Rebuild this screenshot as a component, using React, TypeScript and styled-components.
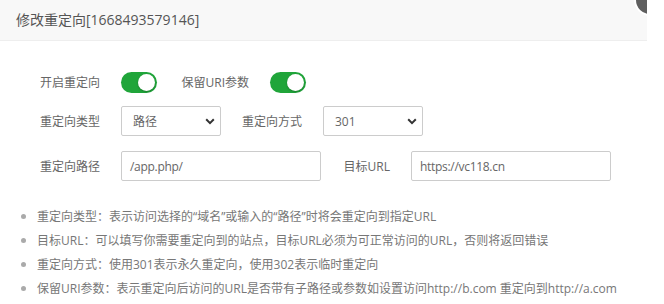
import React from "react";
import styled, { createGlobalStyle } from "styled-components";

const GlobalStyle = createGlobalStyle`
  html, body {
    margin: 0;
    padding: 0;
    background: #fff;
  }
  body {
    font-family: "Open Sans", "Noto Sans CJK SC", sans-serif;
    font-size: 12px;
    color: #666;
  }
`;

const Dialog = styled.div`
  position: relative;
  width: 647px;
  height: 304px;
  overflow: hidden;
  background: #fff;
`;

const Header = styled.div`
  height: 40px;
  line-height: 40px;
  padding-left: 16px;
  background: #f8f8f8;
  border-bottom: 1px solid #eee;
  font-size: 14px;
  color: #555;
`;

const Close = styled.span`
  position: absolute;
  left: 634px;
  top: -16px;
  width: 28px;
  height: 28px;
  border-radius: 50%;
  background: #5f5f5f;
  border: 2px solid #fff;
`;

const Form = styled.div`
  padding: 26px 0 0 20px;
`;

const Row = styled.div<{ $mb?: number }>`
  display: flex;
  align-items: center;
  height: 30px;
  margin-bottom: ${(p) => p.$mb ?? 0}px;
`;

const Label = styled.span<{ $w: number; $ml?: number }>`
  width: ${(p) => p.$w}px;
  margin-left: ${(p) => p.$ml ?? 0}px;
  margin-right: 21px;
  text-align: right;
  font-size: 12px;
  color: #666;
  white-space: nowrap;
`;

const Switch = styled.span<{ $on: boolean }>`
  display: flex;
  align-items: center;
  justify-content: ${(p) => (p.$on ? "flex-end" : "flex-start")};
  width: 36px;
  height: 21px;
  padding: 0 2px;
  box-sizing: border-box;
  border-radius: 11px;
  background: ${(p) => (p.$on ? "#20a53a" : "#ccc")};
`;

const Knob = styled.span`
  width: 17px;
  height: 17px;
  border-radius: 50%;
  background: #fff;
  box-shadow: 0 1px 2px rgba(0, 0, 0, 0.25);
`;

const Select = styled.div`
  display: flex;
  align-items: center;
  justify-content: space-between;
  box-sizing: border-box;
  width: 100px;
  height: 30px;
  padding: 0 5px 0 11px;
  border: 1px solid #ccc;
  border-radius: 2px;
  font-size: 12px;
  color: #666;
`;

const Input = styled.div<{ $w: number }>`
  display: flex;
  align-items: center;
  box-sizing: border-box;
  width: ${(p) => p.$w}px;
  height: 30px;
  padding: 0 8px;
  border: 1px solid #ccc;
  border-radius: 2px;
  font-size: 12px;
  color: #666;
  letter-spacing: -0.3px;
`;

const Notes = styled.ul`
  list-style: none;
  margin: 23px 0 0;
  padding: 0 0 0 21px;
`;

const Note = styled.li`
  display: flex;
  align-items: center;
  height: 24px;
  font-size: 12px;
  color: #777;
  white-space: nowrap;

  &::before {
    content: "";
    width: 5px;
    height: 5px;
    border-radius: 50%;
    background: #aaa;
    margin-right: 11px;
    flex-shrink: 0;
  }
`;

const Chevron = () => (
  <svg width="10" height="7" viewBox="0 0 10 7">
    <path d="M1.2 1.3L5 5.1l3.8-3.8" fill="none" stroke="#333" strokeWidth="2" />
  </svg>
);

const Toggle: React.FC<{ on: boolean }> = ({ on }) => (
  <Switch $on={on}>
    <Knob />
  </Switch>
);

const notes = [
  "重定向类型：表示访问选择的“域名”或输入的“路径”时将会重定向到指定URL",
  "目标URL：可以填写你需要重定向到的站点，目标URL必须为可正常访问的URL，否则将返回错误",
  "重定向方式：使用301表示永久重定向，使用302表示临时重定向",
  "保留URI参数：表示重定向后访问的URL是否带有子路径或参数如设置访问http://b.com 重定向到http://a.com",
];

export default function App() {
  return (
    <>
      <GlobalStyle />
      <Dialog>
        <Header>修改重定向[1668493579146]</Header>
        <Close />
        <Form>
          <Row $mb={9}>
            <Label $w={80}>开启重定向</Label>
            <Toggle on />
            <Label $w={80} $ml={12}>保留URI参数</Label>
            <Toggle on />
          </Row>
          <Row $mb={15}>
            <Label $w={80}>重定向类型</Label>
            <Select>
              路径
              <Chevron />
            </Select>
            <Label $w={80} $ml={1}>重定向方式</Label>
            <Select>
              301
              <Chevron />
            </Select>
          </Row>
          <Row>
            <Label $w={80}>重定向路径</Label>
            <Input $w={200}>/app.php/</Input>
            <Label $w={69}>目标URL</Label>
            <Input $w={200}>https://vc118.cn</Input>
          </Row>
        </Form>
        <Notes>
          {notes.map((n) => (
            <Note key={n}>{n}</Note>
          ))}
        </Notes>
      </Dialog>
    </>
  );
}
